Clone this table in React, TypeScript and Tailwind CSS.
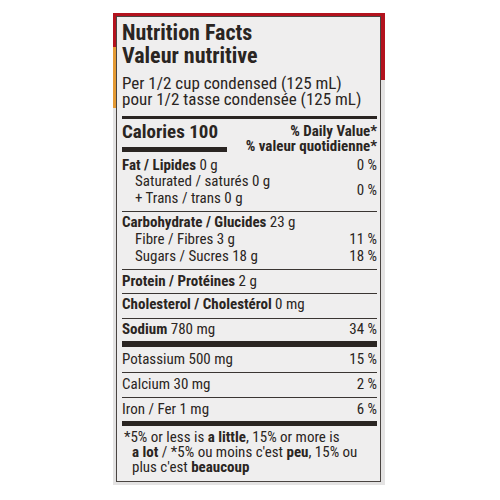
import React from "react";

function Row({ label, bold, value, pct, indent }: { label?: string; bold?: string; value?: string; pct?: string; indent?: boolean }) {
  return (
    <div className={`flex justify-between text-[15px] leading-[17px] whitespace-nowrap [font-stretch:80%] ${indent ? "pl-[13px]" : ""}`}>
      <span>
        {bold ? <b className="font-bold">{bold}</b> : null}
        {label ? <span>{label}</span> : null}
        {value ? <span>{value}</span> : null}
      </span>
      {pct ? <span>{pct}</span> : null}
    </div>
  );
}

export default function App() {
  return (
    <div className="w-[500px] h-[500px] bg-white pl-[113px] pt-[13px] font-[Roboto,sans-serif] [font-stretch:83%]">
      <div className="relative w-[272px] h-[472px] bg-[#e4e3e3] pt-[3px] pl-[3px] pr-[4px] pb-[3px]">
        <div className="absolute left-0 top-0 w-[272px] h-[3px] bg-[#b3121d]" />
        <div className="absolute right-0 top-0 w-[4px] h-[67px] bg-[#b3121d]" />
        <div className="absolute left-0 top-0 w-[3px] h-[34px] bg-[#b3121d]" />
        <div className="absolute left-0 top-[34px] w-[3px] h-[61px] bg-[#e49a34]" />
        <div className="relative h-full border border-[#4a4542] bg-[#efeeee] pl-[5px] pr-[3px] text-[#2a2522]">
          {/* header */}
          <div className="pt-[4px] whitespace-nowrap">
            <div className="text-[22px] leading-[23px] font-bold [font-stretch:87%]">Nutrition Facts</div>
            <div className="text-[22px] leading-[23px] font-bold [font-stretch:87%]">Valeur nutritive</div>
            <div className="mt-[8px] text-[17px] leading-[16px]">Per 1/2 cup condensed (125 mL)</div>
            <div className="text-[17px] leading-[16px] [font-stretch:81%]">pour 1/2 tasse condensée (125 mL)</div>
          </div>
          <div className="mt-[9px] h-[3px] bg-[#2a2522]" />
          {/* calories */}
          <div className="flex justify-between h-[36px] whitespace-nowrap">
            <div className="pt-[2px] flex flex-col">
              <div className="text-[19px] leading-[22px] font-bold">Calories 100</div>
              <div className="mt-[4px] h-[5px] w-[105px] bg-[#2a2522]" />
            </div>
            <div className="pt-[5px] text-right text-[15px] leading-[15px] font-bold">
              <div>% Daily Value*</div>
              <div>% valeur quotidienne*</div>
            </div>
          </div>
          {/* fat */}
          <div className="h-[56px] pt-[1.5px] whitespace-nowrap [font-stretch:80%]">
            <div className="flex justify-between text-[15px] leading-[16.5px]">
              <span><b>Fat / Lipides</b> 0 g</span>
              <span>0 %</span>
            </div>
            <div className="flex justify-between items-center text-[15px] leading-[16.5px]">
              <div className="pl-[13px]">
                <div>Saturated / saturés 0 g</div>
                <div>+ Trans / trans 0 g</div>
              </div>
              <span className="pt-[1px]">0 %</span>
            </div>
          </div>
          <div className="h-px bg-[#3a3532]" />
          <div className="h-[57px] pt-[2px]">
            <Row bold="Carbohydrate / Glucides" value=" 23 g" />
            <Row label="Fibre / Fibres 3 g" pct="11 %" indent />
            <Row label="Sugars / Sucres 18 g" pct="18 %" indent />
          </div>
          <div className="h-px bg-[#3a3532]" />
          <div className="h-[23px] pt-[3px]">
            <Row bold="Protein / Protéines" value=" 2 g" />
          </div>
          <div className="h-px bg-[#3a3532]" />
          <div className="h-[24px] pt-[2px]">
            <Row bold="Cholesterol / Cholestérol" value=" 0 mg" />
          </div>
          <div className="h-px bg-[#3a3532]" />
          <div className="h-[22px] pt-[1.5px]">
            <Row bold="Sodium" value=" 780 mg" pct="34 %" />
          </div>
          <div className="h-[6px] bg-[#2a2522]" />
          <div className="h-[25px] pt-[4px]">
            <Row label="Potassium 500 mg" pct="15 %" />
          </div>
          <div className="h-px bg-[#3a3532]" />
          <div className="h-[24px] pt-[2.5px]">
            <Row label="Calcium 30 mg" pct="2 %" />
          </div>
          <div className="h-px bg-[#3a3532]" />
          <div className="h-[23px] pt-[2.5px]">
            <Row label="Iron / Fer 1 mg" pct="6 %" />
          </div>
          <div className="h-[5px] bg-[#2a2522]" />
          <div className="pt-[4px] text-[15px] leading-[15px] whitespace-nowrap">
            <div className="pl-[2px]">*5% or less is <b>a little</b>, 15% or more is</div>
            <div className="pl-[10px]"><b>a lot</b> / *5% ou moins c'est <b>peu</b>, 15% ou</div>
            <div className="pl-[10px]">plus c'est <b>beaucoup</b></div>
          </div>
        </div>
      </div>
    </div>
  );
}
